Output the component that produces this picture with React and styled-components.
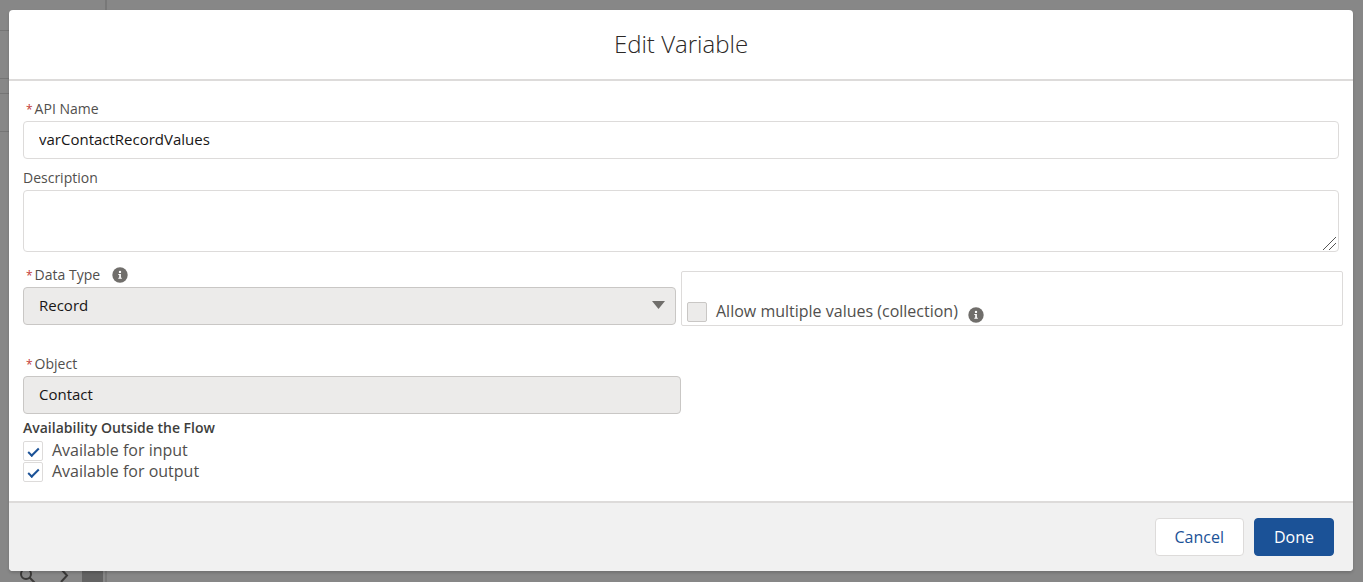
import React, { useState } from 'react';
import styled, { createGlobalStyle, css } from 'styled-components';

const GlobalStyle = createGlobalStyle`
    * {
        box-sizing: border-box;
    }

    body {
        margin: 0;
        background: #878787;
        color: #3e3e3c;
        font-family: "Open Sans", "Noto Sans", sans-serif;
        font-size: 16px;
        line-height: 20px;
    }
`;

const Page = styled.div`
    position: relative;
    display: flex;
    min-height: 100vh;
`;

const Toolbox = styled.aside`
    display: flex;
    flex-direction: column;
    width: 107px;
    border-right: 2px solid #787878;
`;

const ToolboxRow = styled.div`
    height: ${({ $height }) => $height}px;
    border-bottom: 1px solid #757575;
`;

const ToolboxFooter = styled.div`
    display: flex;
    align-items: flex-start;
    gap: 12px;
    height: 16px;
    margin-top: auto;
    padding-left: 19px;
    overflow: hidden;
    color: #3b3a39;
`;

const ScrollThumb = styled.div`
    width: 21px;
    height: 16px;
    background: #636363;
`;

const Overlay = styled.div`
    position: absolute;
    inset: 0;
    padding: 10px 10px 11px 9px;
`;

const Modal = styled.section`
    border-radius: 4px;
    background: #fff;
    box-shadow: 0 2px 3px rgba(0, 0, 0, 0.16);
`;

const ModalHeader = styled.header`
    padding: 18px 16px 19px;
    border-bottom: 2px solid #dddbda;
    text-align: center;
`;

const Title = styled.h2`
    margin: 0;
    color: #2b2826;
    font-size: 24px;
    font-weight: 300;
    line-height: 32px;
`;

const ModalBody = styled.form`
    padding: 16px 14px 18px;
`;

const Field = styled.div`
    display: flex;
    flex-direction: column;
    width: ${({ $width }) => $width || 'auto'};
    margin-bottom: ${({ $gap }) => $gap || 0}px;
`;

const LabelRow = styled.div`
    display: flex;
    align-items: center;
    gap: 12px;
    height: 24px;
`;

const Label = styled.label`
    font-size: 14px;
    color: #514f4d;
`;

const Required = styled.abbr`
    margin: 0 2px 0 3px;
    color: #c23934;
    font-size: 12px;
    text-decoration: none;
`;

const control = css`
    width: 100%;
    border: 1px solid #dddbda;
    border-radius: 4px;
    background: #fff;
    color: #181616;
    font-family: inherit;
    font-size: 15px;
    line-height: 20px;

    &:disabled {
        border-color: #c9c7c5;
        background: #ecebea;
        color: #181616;
        opacity: 1;
    }
`;

const Input = styled.input`
    ${control}
    height: 38px;
    padding: 0 15px 2px;
`;

const TextArea = styled.textarea`
    ${control}
    display: block;
    height: 62px;
    padding: 8px 15px;
    resize: vertical;

    &::-webkit-resizer {
        background: linear-gradient(
            135deg,
            transparent 47%,
            #555 48%,
            #555 52%,
            transparent 53%,
            transparent 70%,
            #555 71%,
            #555 75%,
            transparent 76%
        ) 0 1px / 13px 13px no-repeat;
    }
`;

const SelectWrap = styled.div`
    position: relative;
`;

const Select = styled.select`
    ${control}
    display: block;
    height: 38px;
    padding: 0 32px 2px 15px;
    appearance: none;
`;

const Arrow = styled.svg`
    position: absolute;
    top: 14px;
    right: 11px;
    pointer-events: none;
`;

const TypeRow = styled.div`
    display: flex;
    align-items: flex-end;
    gap: 5px;
    margin: 0 -4px 27px 0;
`;

const CollectionBox = styled.div`
    display: flex;
    flex: 1;
    align-items: flex-end;
    gap: 10px;
    height: 55px;
    margin-bottom: -1px;
    padding: 0 5px 2px;
    border: 1px solid #dddbda;
    border-radius: 2px;
`;

const CheckLabel = styled.label`
    display: flex;
    align-items: flex-start;
    gap: 9px;
    height: 21px;
    color: #514f4d;
    line-height: 18px;
`;

const Checkbox = styled.input`
    appearance: none;
    display: grid;
    place-items: center;
    width: 20px;
    height: 20px;
    margin: 0;
    border: 1px solid #dddbda;
    border-radius: 2px;
    background: #fff;

    &:disabled {
        border-color: #c9c7c5;
        background: #ecebea;
    }

    &:checked::after {
        content: '';
        box-sizing: border-box;
        width: 11px;
        height: 6px;
        margin-bottom: 1px;
        border-bottom: 2px solid #1b5297;
        border-left: 2px solid #1b5297;
        transform: rotate(-45deg);
    }
`;

const Group = styled.fieldset`
    margin: 0;
    padding: 0;
    border: 0;
`;

const Legend = styled.legend`
    padding: 0;
    height: 27px;
    font-size: 14px;
    font-weight: 600;
    line-height: 28px;
`;

const ModalFooter = styled.footer`
    display: flex;
    justify-content: flex-end;
    gap: 10px;
    padding: 15px 19px;
    border-top: 2px solid #dddbda;
    border-radius: 0 0 4px 4px;
    background: #f1f1f1;
`;

const Button = styled.button`
    height: 38px;
    padding: 0 19px;
    border: 1px solid ${({ $brand }) => ($brand ? '#1b5297' : '#dddbda')};
    border-radius: 4px;
    background: ${({ $brand }) => ($brand ? '#1b5297' : '#fff')};
    color: ${({ $brand }) => ($brand ? '#fff' : '#1b5297')};
    font-family: inherit;
    font-size: 16px;
`;

const InfoIcon = () => (
    <svg width="16" height="16" viewBox="0 0 16 16" aria-hidden="true">
        <circle cx="8" cy="8" r="7.7" fill="#706e6b" />
        <circle cx="8" cy="4.9" r="1.2" fill="#fff" />
        <path d="M6.3 7h2.6v3.7h.9v1H6.3v-1h.9V8h-.9z" fill="#fff" />
    </svg>
);

const SearchIcon = () => (
    <svg width="18" height="18" viewBox="0 0 18 18" fill="none" stroke="currentColor" strokeWidth="2">
        <circle cx="7" cy="8" r="5" />
        <path d="m10.500 11.500 5 5" />
    </svg>
);

const ChevronIcon = () => (
    <svg width="21" height="18" viewBox="0 0 21 18" fill="none" stroke="currentColor" strokeWidth="2">
        <path d="m12 3 6 6.500-6 6.500" />
    </svg>
);

const App = () => {
    const [name, setName] = useState('varContactRecordValues');
    const [description, setDescription] = useState('');

    return (
        <Page>
            <GlobalStyle />
            <Toolbox>
                <ToolboxRow $height={31} />
                <ToolboxRow $height={48} />
                <ToolboxRow $height={15} />
                <ToolboxRow $height={38} />
                <ToolboxFooter>
                    <SearchIcon />
                    <ChevronIcon />
                    <ScrollThumb />
                </ToolboxFooter>
            </Toolbox>
            <Overlay>
                <Modal role="dialog" aria-labelledby="modal-title">
                    <ModalHeader>
                        <Title id="modal-title">Edit Variable</Title>
                    </ModalHeader>
                    <ModalBody id="variable-form">
                        <Field $gap={7}>
                            <LabelRow>
                                <Label htmlFor="api-name"><Required>*</Required>API Name</Label>
                            </LabelRow>
                            <Input id="api-name" value={name} onChange={e => setName(e.target.value)} />
                        </Field>
                        <Field $gap={11}>
                            <LabelRow>
                                <Label htmlFor="description">Description</Label>
                            </LabelRow>
                            <TextArea
                                id="description"
                                value={description}
                                onChange={e => setDescription(e.target.value)}
                            />
                        </Field>
                        <TypeRow>
                            <Field $width="calc(50% - 7px)">
                                <LabelRow>
                                    <Label htmlFor="data-type"><Required>*</Required>Data Type</Label>
                                    <InfoIcon />
                                </LabelRow>
                                <SelectWrap>
                                    <Select id="data-type" disabled defaultValue="record">
                                        <option value="record">Record</option>
                                    </Select>
                                    <Arrow width="13" height="8" viewBox="0 0 13 8">
                                        <path d="M0 0h13L6.5 8z" fill="#706e6b" />
                                    </Arrow>
                                </SelectWrap>
                            </Field>
                            <CollectionBox>
                                <CheckLabel>
                                    <Checkbox type="checkbox" disabled />
                                    Allow multiple values (collection)
                                </CheckLabel>
                                <InfoIcon />
                            </CollectionBox>
                        </TypeRow>
                        <Field $width="50%">
                            <LabelRow>
                                <Label htmlFor="object"><Required>*</Required>Object</Label>
                            </LabelRow>
                            <Input id="object" value="Contact" disabled readOnly />
                        </Field>
                        <Group>
                            <Legend>Availability Outside the Flow</Legend>
                            <CheckLabel>
                                <Checkbox type="checkbox" defaultChecked />
                                Available for input
                            </CheckLabel>
                            <CheckLabel>
                                <Checkbox type="checkbox" defaultChecked />
                                Available for output
                            </CheckLabel>
                        </Group>
                    </ModalBody>
                    <ModalFooter>
                        <Button type="button">Cancel</Button>
                        <Button type="submit" form="variable-form" $brand>Done</Button>
                    </ModalFooter>
                </Modal>
            </Overlay>
        </Page>
    );
};

export default App;
